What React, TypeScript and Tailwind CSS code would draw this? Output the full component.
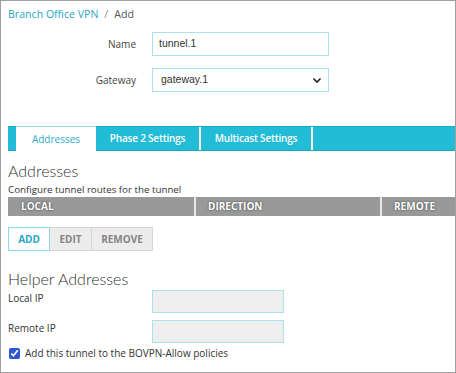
import React from "react";

function Label({ children }: { children: React.ReactNode }) {
  return <div className="w-[128px] text-right text-[10px] text-[#444]">{children}</div>;
}

export default function App() {
  return (
    <div className="w-[456px] h-[373px] bg-white border border-[#a0a0a0] overflow-hidden font-['Open_Sans',sans-serif] text-[#333]">
      {/* breadcrumb */}
      <div className="pl-[7px] pt-[5px] h-[17px] text-[10.6px] leading-[17px] flex gap-[6px]">
        <span className="text-[#2aa7c7]">Branch Office VPN</span>
        <span className="text-[#888]">/</span>
        <span className="text-[#555]">Add</span>
      </div>

      {/* form */}
      <div className="mt-[14px] flex items-center gap-[16px] pl-[7px]">
        <Label>Name</Label>
        <div className="w-[177px] h-[24px] border border-[#a9e2ee] px-[6px] flex items-center text-[10.5px] font-['Liberation_Sans',sans-serif] text-[#333]">
          tunnel.1
        </div>
      </div>
      <div className="mt-[12px] flex items-center gap-[16px] pl-[7px]">
        <Label>Gateway</Label>
        <div className="w-[177px] h-[24px] border border-[#a9e2ee] pl-[8px] pr-[6px] flex items-center justify-between text-[10.5px] font-['Liberation_Sans',sans-serif] text-[#333]">
          <span>gateway.1</span>
          <svg width="10" height="7" viewBox="0 0 10 7" fill="none">
            <path d="M1.5 1.5 L5 5 L8.5 1.5" stroke="#222" strokeWidth="1.6" />
          </svg>
        </div>
      </div>

      {/* tabs */}
      <div className="mt-[34px] ml-[7px] h-[25px] bg-[#23bcd6] border-t border-b border-[#14a9c4] flex text-[10px]">
        <div className="w-[8px]" />
        <div className="w-[80px] -mt-px -mb-px bg-white border-t border-[#9ee0ee] flex items-center justify-center text-[#30a9c8]">
          Addresses
        </div>
        <div className="w-[103px] flex items-center justify-center font-semibold tracking-[-0.2px] text-white">Phase 2 Settings</div>
        <div className="w-[2px] bg-white" />
        <div className="w-[110px] flex items-center justify-center font-semibold tracking-[-0.2px] text-white">Multicast Settings</div>
        <div className="w-[2px] bg-white" />
        <div className="flex-1" />
      </div>

      {/* addresses */}
      <div className="pl-[7px] mt-[10px] text-[16px] leading-[20px] font-['Lato',sans-serif] font-light text-[#333]">
        Addresses
      </div>
      <div className="pl-[7px] mt-[2px] text-[9.75px] leading-[13px] text-[#333]">
        Configure tunnel routes for the tunnel
      </div>
      <div className="ml-[7px] mt-[1px] h-[19px] bg-[#999999] flex text-[10px] font-bold text-white [text-shadow:0_0_2px_#333]">
        <div className="w-[186px] pl-[13px] flex items-center">LOCAL</div>
        <div className="w-[2px] bg-[#e8e8e8]" />
        <div className="w-[184px] pl-[12px] flex items-center">DIRECTION</div>
        <div className="w-[2px] bg-[#e8e8e8]" />
        <div className="flex-1 pl-[12px] flex items-center">REMOTE</div>
      </div>

      <div className="ml-[7px] mt-[11px] flex h-[24px] text-[10px] font-bold">
        <div className="w-[42px] border border-[#8fd8e9] bg-white text-[#2aa7c9] flex items-center justify-center">ADD</div>
        <div className="w-[42px] border border-l-0 border-[#d6d6d6] bg-[#ececec] text-[#858585] flex items-center justify-center">EDIT</div>
        <div className="w-[61px] border border-l-0 border-[#d6d6d6] bg-[#ececec] text-[#858585] flex items-center justify-center">REMOVE</div>
      </div>

      {/* helper addresses */}
      <div className="pl-[7px] mt-[18px] text-[16px] leading-[20px] font-['Lato',sans-serif] font-light text-[#333]">
        Helper Addresses
      </div>
      <div className="mt-[1px] pl-[7px] flex items-start">
        <div className="w-[144px] text-[10px] leading-[14px] pt-[1px]">Local IP</div>
        <div className="w-[132px] h-[23px] bg-[#eeeeee] border border-[#a9e2ee]" />
      </div>
      <div className="mt-[7px] pl-[7px] flex items-start">
        <div className="w-[144px] text-[10px] leading-[14px] pt-[1px]">Remote IP</div>
        <div className="w-[132px] h-[23px] bg-[#eeeeee] border border-[#a9e2ee]" />
      </div>
      <label className="mt-[3px] pl-[8px] flex items-center gap-[5px] text-[10px] text-[#333]">
        <input type="checkbox" defaultChecked className="w-[11px] h-[11px] m-0 accent-[#2b57d6]" />
        <span>Add this tunnel to the BOVPN-Allow policies</span>
      </label>
    </div>
  );
}
